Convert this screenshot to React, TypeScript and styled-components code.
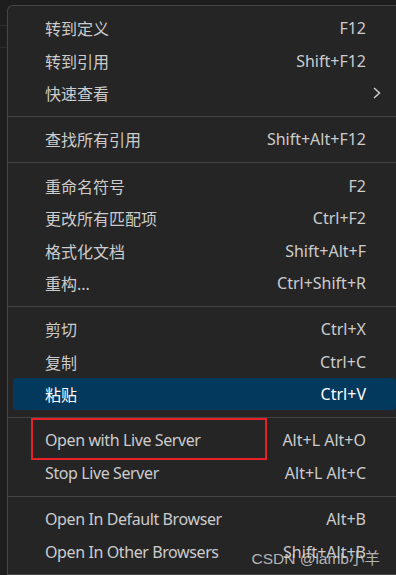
import React from 'react';
import styled, { createGlobalStyle } from 'styled-components';

const GlobalStyle = createGlobalStyle`
  html, body {
    margin: 0;
    padding: 0;
    background: #1e1e1e;
    overflow: hidden;
  }
  body {
    font-family: "Noto Sans", "Noto Sans CJK SC", sans-serif;
    -webkit-font-smoothing: antialiased;
  }
`;

const Screen = styled.div`
  position: relative;
  display: flex;
  align-items: flex-start;
  width: 396px;
  height: 575px;
  overflow: hidden;
`;

const Gutter = styled.div`
  width: 7px;
  flex-shrink: 0;
  display: flex;
  flex-direction: column;
  gap: 21px;
  padding-top: 25px;
`;

const GutterLine = styled.div`
  height: 1px;
  background: #2c2c2c;
`;

const Menu = styled.div`
  flex-shrink: 0;
  width: 393px;
  margin-top: 5px;
  padding-top: 6px;
  background: #252526;
  border-top: 1px solid #454545;
  border-left: 1px solid #454545;
  border-top-left-radius: 6px;
  display: flex;
  flex-direction: column;
`;

const Item = styled.div<{ $active?: boolean }>`
  position: relative;
  flex-shrink: 0;
  display: flex;
  align-items: center;
  justify-content: space-between;
  height: 32.4px;
  margin: 0 5px;
  padding: 0 30px 0 32px;
  border-radius: 4px;
  font-size: 16px;
  color: ${(p) => (p.$active ? '#ffffff' : '#cccccc')};
  background: ${(p) => (p.$active ? '#04395e' : 'transparent')};
`;

const Label = styled.span<{ $latin?: boolean }>`
  white-space: nowrap;
  letter-spacing: ${(p) => (p.$latin ? '-0.4px' : '0')};
`;

const Shortcut = styled.span`
  white-space: nowrap;
`;

const SubmenuArrow = styled.svg`
  width: 10px;
  height: 12px;
  margin-right: -16px;
`;

const Separator = styled.div`
  flex-shrink: 0;
  height: 1px;
  margin: 6.5px 0;
  background: #454545;
`;

const Callout = styled.div`
  position: absolute;
  left: 18px;
  top: -6px;
  width: 232px;
  height: 38px;
  border: 2px solid #e8202a;
`;

const Watermark = styled.div`
  position: absolute;
  right: 16px;
  bottom: 7px;
  font-size: 15.5px;
  color: rgba(235, 235, 235, 0.72);
  font-family: "Liberation Sans", "Noto Sans CJK SC", sans-serif;
  white-space: nowrap;
`;

type Entry = { label: string; key?: string; sub?: boolean; active?: boolean; marked?: boolean } | 'sep';

const entries: Entry[] = [
  { label: '转到定义', key: 'F12' },
  { label: '转到引用', key: 'Shift+F12' },
  { label: '快速查看', sub: true },
  'sep',
  { label: '查找所有引用', key: 'Shift+Alt+F12' },
  'sep',
  { label: '重命名符号', key: 'F2' },
  { label: '更改所有匹配项', key: 'Ctrl+F2' },
  { label: '格式化文档', key: 'Shift+Alt+F' },
  { label: '重构...', key: 'Ctrl+Shift+R' },
  'sep',
  { label: '剪切', key: 'Ctrl+X' },
  { label: '复制', key: 'Ctrl+C' },
  { label: '粘贴', key: 'Ctrl+V', active: true },
  'sep',
  { label: 'Open with Live Server', key: 'Alt+L Alt+O', marked: true },
  { label: 'Stop Live Server', key: 'Alt+L Alt+C' },
  'sep',
  { label: 'Open In Default Browser', key: 'Alt+B' },
  { label: 'Open In Other Browsers', key: 'Shift+Alt+B' },
  'sep',
];

const App = () => {
  return (
    <Screen>
      <GlobalStyle />
      <Gutter>
        <GutterLine />
        <GutterLine />
      </Gutter>
      <Menu>
        {entries.map((e, i) =>
          e === 'sep' ? (
            <Separator key={i} />
          ) : (
            <Item key={i} $active={e.active}>
              <Label $latin={/^[\x20-\x7e]+$/.test(e.label)}>{e.label}</Label>
              {e.key && <Shortcut>{e.key}</Shortcut>}
              {e.sub && (
                <SubmenuArrow viewBox="0 0 10 12">
                  <path d="M2 1 L7.5 6 L2 11" fill="none" stroke="#cccccc" strokeWidth="1.5" />
                </SubmenuArrow>
              )}
              {e.marked && <Callout />}
            </Item>
          )
        )}
      </Menu>
      <Watermark>CSDN @lamb小羊</Watermark>
    </Screen>
  );
};

export default App;
